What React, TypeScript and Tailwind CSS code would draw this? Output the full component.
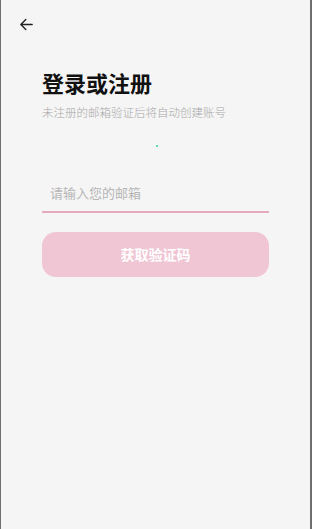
const cjk = { fontFamily: '"Noto Sans CJK SC", "Noto Sans", sans-serif' };

export default function App() {
  return (
    <div
      className="w-[312px] h-[529px] bg-[#f5f5f5] border-l border-r-2 border-[#6f6f6f] flex flex-col"
      style={cjk}
    >
      <div className="pl-[17px] pt-[16px]">
        <svg className="w-[17px] h-[17px] text-[#222]" viewBox="0 0 24 24" fill="none" stroke="currentColor" strokeWidth={2} strokeLinecap="round" strokeLinejoin="round">
          <path d="M20 12H4M11 5l-7 7 7 7" />
        </svg>
      </div>

      <div className="px-[41px] pt-[34px] flex flex-col">
        <h1 className="text-[22px] leading-[30px] font-bold text-[#111]">登录或注册</h1>
        <p className="text-[11.5px] leading-[16px] mt-[7px] text-[#a8a8a8] font-light">未注册的邮箱验证后将自动创建账号</p>

        <div className="flex justify-center mt-[25px] pl-[2px]">
          <div className="w-[2px] h-[2px] bg-[#5fd6b8]" />
        </div>

        <div className="mt-[32px] border-b-2 border-b-[#e6aabd] pb-[8px] pl-[8px]">
          <input
            className="w-full bg-transparent outline-none text-[13px] leading-[20px] text-[#333] placeholder:text-[#b5b5b5]"
            placeholder="请输入您的邮箱"
            style={cjk}
          />
        </div>

        <button
          className="mt-[19px] h-[45px] w-full rounded-[14px] bg-[#f0c6d4] text-white text-[14px] font-bold"
          style={cjk}
        >
          获取验证码
        </button>
      </div>
    </div>
  );
}
